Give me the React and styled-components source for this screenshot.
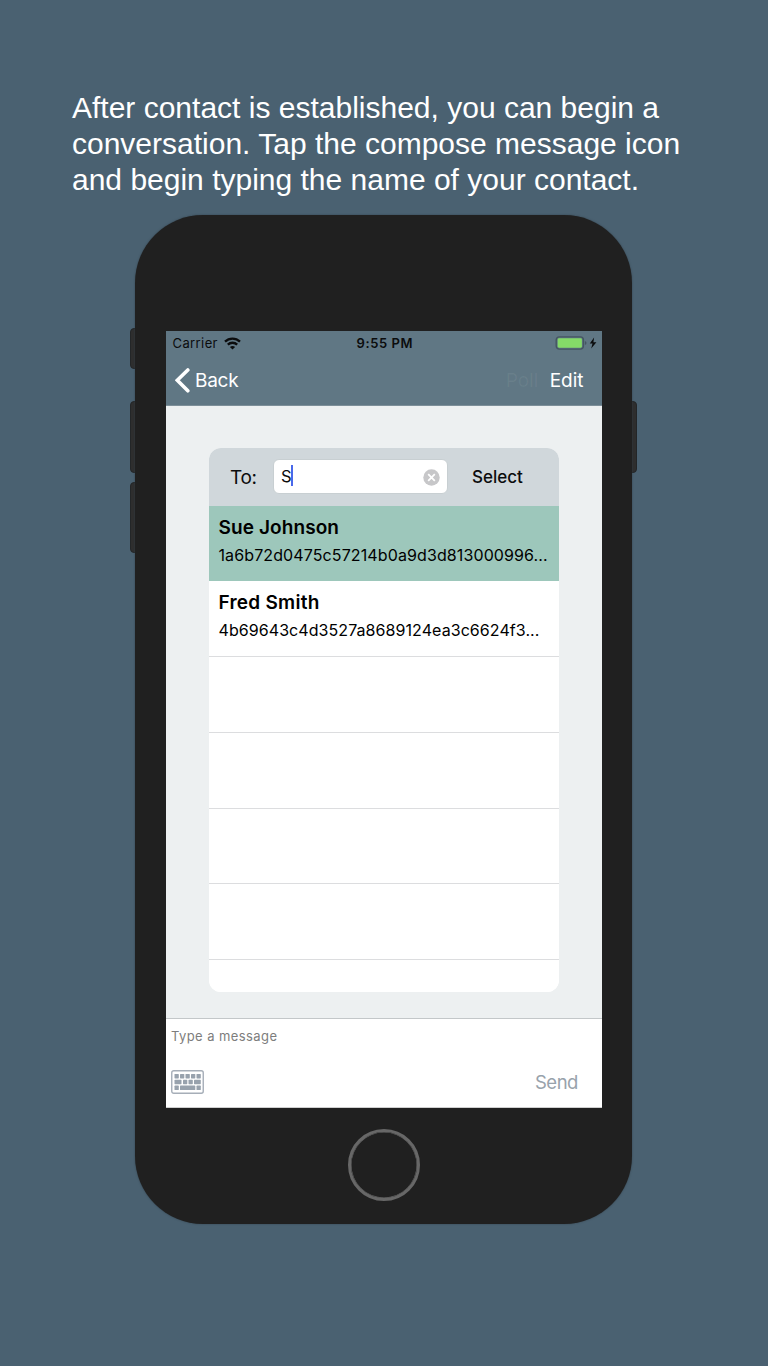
import React from "react";
import styled, { createGlobalStyle } from "styled-components";

const GlobalStyle = createGlobalStyle`
  * { box-sizing: border-box; }
  body { margin: 0; background: #4a6171; }
`;

const Page = styled.main`
  width: 768px;
  height: 1366px;
  padding-top: 90px;
  overflow: hidden;
  background: #4a6171;
  font-family: Inter, "Liberation Sans", sans-serif;
  color: #0b0c0d;
`;

const Caption = styled.h1`
  margin: 0 0 17px 72px;
  font: 400 30px/36px "Liberation Sans", Arial, sans-serif;
  color: #fff;
  white-space: nowrap;
`;

const CaptionLine = styled.span`
  display: block;
`;

const Stage = styled.div`
  position: relative;
  z-index: 0;
  width: 497px;
  margin-left: 135px;
`;

const Phone = styled.section`
  height: 1009px;
  padding: 116px 30px 0 30.5px;
  border-radius: 68px;
  background: #202020;
  box-shadow: 0 0 2px #34424c;
`;

const SideButton = styled.i`
  position: absolute;
  z-index: -1;
  top: ${(p) => p.$top}px;
  ${(p) => (p.$right ? "right: -5px;" : "left: -5px;")}
  width: 12px;
  height: ${(p) => p.$height}px;
  border: 1px solid #232628;
  border-radius: 4px;
  background: #2e2e2e;
`;

const Screen = styled.div`
  display: flex;
  flex-direction: column;
  width: 436.5px;
  height: 776.5px;
  background: #edf0f1;
`;

const Header = styled.header`
  flex: none;
  height: 75px;
  background: #607784;
  border-bottom: 1px solid #7d8f99;
`;

const StatusBar = styled.div`
  display: grid;
  grid-template-columns: 184px 1fr auto;
  align-items: center;
  height: 24px;
  padding: 0 5px 0 7px;
  font-size: 13px;
`;

const Carrier = styled.div`
  display: flex;
  align-items: center;
  gap: 6px;
  letter-spacing: 0.4px;
`;

const Clock = styled.span`
  font-weight: 600;
  letter-spacing: 0.6px;
`;

const Power = styled.div`
  display: flex;
  align-items: center;
  height: 24px;
`;

const NavBar = styled.nav`
  display: flex;
  align-items: center;
  height: 50px;
  padding: 0 18.5px 0 9.5px;
  color: #fff;
  font-size: 19px;
`;

const BackLabel = styled.span`
  margin-left: 5px;
  letter-spacing: -0.25px;
`;

const GhostAction = styled.span`
  margin-left: auto;
  width: 33px;
  color: rgba(255, 255, 255, 0.06);
`;

const EditAction = styled.span`
  margin-left: 11px;
`;

const Conversation = styled.div`
  flex: 1;
  padding: 41.5px 43.5px 0;
`;

const Picker = styled.div`
  height: 544px;
  overflow: hidden;
  border-radius: 12px;
  background: #fff;
`;

const PickerBar = styled.div`
  display: flex;
  align-items: center;
  height: 58px;
  padding-left: 21px;
  background: #d0d7db;
`;

const ToLabel = styled.label`
  width: 43px;
  padding-top: 1px;
  font-size: 19px;
  letter-spacing: -0.3px;
`;

const NameField = styled.div`
  display: flex;
  align-items: center;
  width: 175px;
  height: 35px;
  padding: 0 8px 2px 7px;
  border: 1px solid #c8cfd2;
  border-radius: 6px;
  background: #fff;
  font-size: 16.5px;
`;

const Caret = styled.i`
  width: 2px;
  height: 21px;
  margin-left: -1px;
  background: #4968ea;
`;

const ClearIcon = styled.svg`
  margin: 3px -1px 0 auto;
`;

const SelectAction = styled.span`
  margin-left: 24px;
  font-size: 17px;
  font-weight: 500;
`;

const Row = styled.div`
  height: 75.75px;
  padding: 9px 9.5px 0;
  border-bottom: 1px solid ${(p) => (p.$selected ? "#9dc7bb" : "#dcdddf")};
  background: ${(p) => (p.$selected ? "#9dc7bb" : "#fff")};
  color: #000;
  white-space: nowrap;
`;

const ContactName = styled.div`
  font-size: 19px;
  line-height: 26px;
  font-weight: 600;
  letter-spacing: ${(p) => p.$spacing}px;
`;

const ContactKey = styled.div`
  font-size: 16px;
  line-height: 24px;
  margin-top: 2px;
  letter-spacing: ${(p) => p.$spacing}px;
`;

const Composer = styled.div`
  flex: none;
  height: 89.5px;
  padding: 8px 24px 0 5.5px;
  border-top: 1px solid #c3c7c9;
  border-bottom: 1px solid #cfcfcf;
  background: #fff;
`;

const Placeholder = styled.div`
  color: #7d7d7d;
  font-size: 13px;
  line-height: 18px;
  letter-spacing: 0.42px;
`;

const ComposerTools = styled.div`
  display: flex;
  align-items: center;
  justify-content: space-between;
  height: 24px;
  margin-top: 25px;
`;

const SendAction = styled.span`
  color: #98a2ab;
  font-size: 18.5px;
  letter-spacing: -0.45px;
`;

const HomeButton = styled.div`
  width: 72px;
  height: 72px;
  margin: 21px 0 0 182px;
  border: 4px solid #676767;
  border-width: 3.9px;
  border-radius: 50%;
  box-shadow: inset 0 0 0 0.5px #676767;
`;

const contacts = [
  { name: "Sue Johnson", key: "1a6b72d0475c57214b0a9d3d813000996...", selected: true, nameSpacing: 0.1, keySpacing: 0.11 },
  { name: "Fred Smith", key: "4b69643c4d3527a8689124ea3c6624f3...", nameSpacing: 0.25, keySpacing: 0.07 },
];

const keys = [
  [3.5, 4, 4.3], [9, 4, 4.3], [14.5, 4, 4.3], [20, 4, 4.3], [25.5, 4, 4.3],
  [3.5, 9.8, 7], [12, 9.8, 4.3], [17.5, 9.8, 4.3], [23, 9.8, 6.8],
  [3.5, 15.6, 4.3], [9, 15.6, 15.3], [25.5, 15.6, 4.3],
];

const sideButtons = [
  { top: 113, height: 41 },
  { top: 186, height: 72 },
  { top: 267, height: 71 },
  { top: 186, height: 72, right: true },
];

function WifiIcon() {
  return (
    <svg width="17" height="13" viewBox="0 0 17 13" fill="none" stroke="#0b0c0d" strokeWidth="2.3">
      <path d="M1 4.6C5.2.5 11.8.5 16 4.6" />
      <path d="M3.8 7.6C6.4 5.1 10.6 5.1 13.2 7.6" />
      <path d="M8.5 12.5 5.9 9.9C7.3 8.6 9.7 8.6 11.1 9.9Z" fill="#0b0c0d" stroke="none" />
    </svg>
  );
}

function BatteryIcon() {
  return (
    <svg width="42" height="14" viewBox="0 0 42 14">
      <rect x="1.2" y=".9" width="27.2" height="12.2" rx="3" fill="none" stroke="#455661" strokeWidth="1.4" />
      <rect x="2.7" y="2.3" width="24.2" height="9.4" rx="1.4" fill="#85db68" />
      <path d="M29.9 5q1.6.3 1.6 2t-1.6 2Z" fill="#455661" />
      <path d="M39.1 1.6 34.8 7.6H37.5L36.2 12.4 41.4 6.2H38.4Z" fill="#0b0c0d" />
    </svg>
  );
}

function KeyboardIcon() {
  return (
    <svg width="33" height="24" viewBox="0 0 33 24">
      <rect x=".75" y=".75" width="31.5" height="22.5" rx="2" fill="#fff" stroke="#a6aeb8" strokeWidth="1.4" />
      {keys.map(([x, y, w]) => (
        <rect key={`${x}-${y}`} x={x} y={y} width={w} height="4.4" rx=".6" fill="#98a2ad" />
      ))}
    </svg>
  );
}

export default function App() {
  return (
    <Page>
      <GlobalStyle />
      <Caption>
        <CaptionLine>After contact is established, you can begin a</CaptionLine>
        <CaptionLine>conversation. Tap the compose message icon</CaptionLine>
        <CaptionLine>and begin typing the name of your contact.</CaptionLine>
      </Caption>
      <Stage>
        {sideButtons.map((b, i) => (
          <SideButton key={i} $top={b.top} $height={b.height} $right={b.right} />
        ))}
        <Phone>
          <Screen>
            <Header>
              <StatusBar>
                <Carrier>Carrier <WifiIcon /></Carrier>
                <Clock>9:55 PM</Clock>
                <Power><BatteryIcon /></Power>
              </StatusBar>
              <NavBar>
                <svg width="15" height="25" viewBox="0 0 15 25" fill="none" stroke="#fff" strokeWidth="3.6" strokeLinecap="round">
                  <path d="M12.8 2 2.3 12.2 12.8 22.8" />
                </svg>
                <BackLabel>Back</BackLabel>
                <GhostAction>Poll</GhostAction>
                <EditAction>Edit</EditAction>
              </NavBar>
            </Header>
            <Conversation>
              <Picker>
                <PickerBar>
                  <ToLabel>To:</ToLabel>
                  <NameField>
                    S<Caret />
                    <ClearIcon width="17" height="17" viewBox="0 0 17 17">
                      <circle cx="8.5" cy="8.5" r="8.2" fill="#c7c7c9" />
                      <path d="m5.2 5.2 6.6 6.6m0-6.6-6.6 6.6" stroke="#fff" strokeWidth="1.8" />
                    </ClearIcon>
                  </NameField>
                  <SelectAction>Select</SelectAction>
                </PickerBar>
                {contacts.map((c) => (
                  <Row key={c.name} $selected={c.selected}>
                    <ContactName $spacing={c.nameSpacing}>{c.name}</ContactName>
                    <ContactKey $spacing={c.keySpacing}>{c.key}</ContactKey>
                  </Row>
                ))}
                {[0, 1, 2, 3, 4].map((n) => <Row key={n} />)}
              </Picker>
            </Conversation>
            <Composer>
              <Placeholder>Type a message</Placeholder>
              <ComposerTools>
                <KeyboardIcon />
                <SendAction>Send</SendAction>
              </ComposerTools>
            </Composer>
          </Screen>
          <HomeButton />
        </Phone>
      </Stage>
    </Page>
  );
}
